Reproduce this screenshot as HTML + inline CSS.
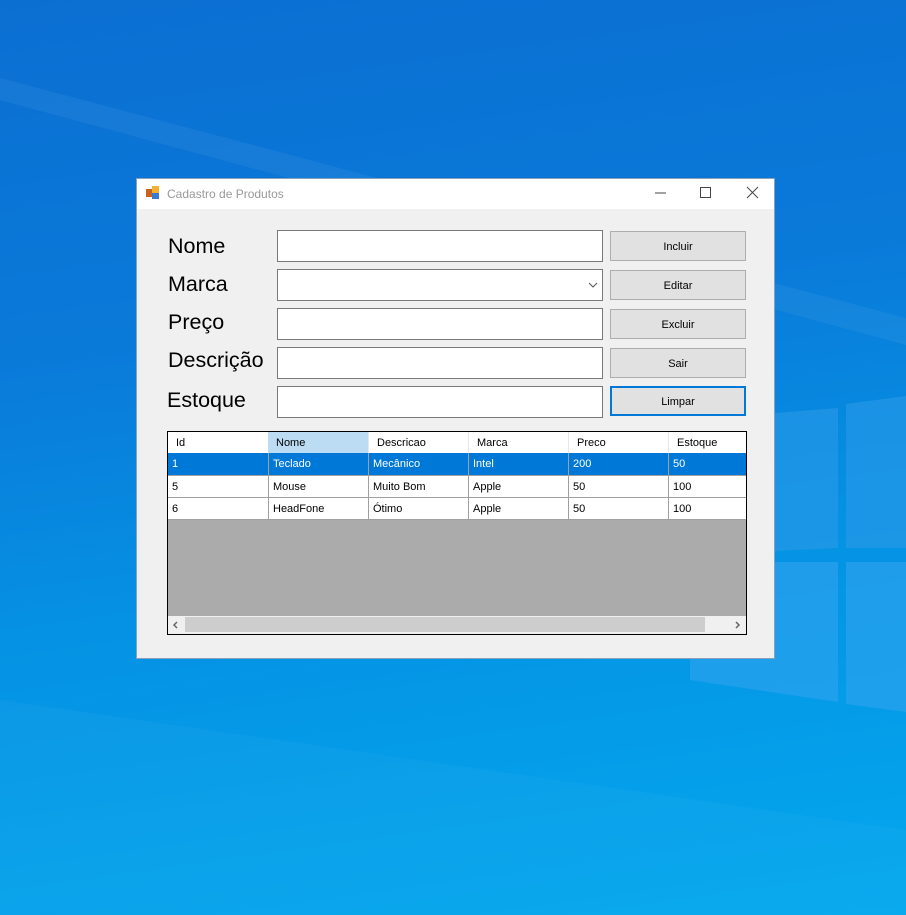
<!DOCTYPE html>
<html><head><style>
body{margin:0;width:906px;height:915px;overflow:hidden;position:relative;font-family:"Liberation Sans",sans-serif;background:linear-gradient(172deg,#0b6fd2 0%,#0a7ad9 35%,#0592e4 62%,#03a8ee 100%);}
.win{position:absolute;left:136px;top:178px;width:639px;height:481px;background:#f0f0f0;border:1px solid #8aa0b8;box-sizing:border-box}
.title{position:absolute;left:0;top:0;width:100%;height:30px;background:#fff}
.title span{position:absolute;left:30px;top:8px;font-size:12px;color:#999}
.lbl{position:absolute;font-size:21.5px;color:#000}
.tb{position:absolute;left:140px;width:326px;height:32px;background:#fff;border:1px solid #7a7a7a;box-sizing:border-box}
.btn{position:absolute;left:473px;width:136px;height:30px;background:#e1e1e1;border:1px solid #adadad;box-sizing:border-box;font-size:11px;text-align:center;line-height:30px}
.grid{position:absolute;left:30px;top:252px;width:580px;height:204px;border:1px solid #000;box-sizing:border-box;background:#ababab;overflow:hidden}
.row{position:absolute;left:0;height:22px;width:578px;font-size:11px}
.c{position:absolute;top:0;height:100%;width:100px;box-sizing:border-box;padding-left:4px;line-height:23px}
</style></head><body>
<svg style="position:absolute;left:0;top:0" width="906" height="915">
<polygon points="0,78 906,318 906,345 0,100" fill="#ffffff" opacity="0.05"/>
<polygon points="690,420 838,408 838,548 690,555" fill="#2a9ae8" opacity="0.6"/>
<polygon points="846,404 906,396 906,548 846,548" fill="#2a9ae8" opacity="0.6"/>
<polygon points="690,562 838,562 838,702 690,680" fill="#30a3ee" opacity="0.6"/>
<polygon points="846,562 906,562 906,712 846,704" fill="#30a3ee" opacity="0.6"/>
<polygon points="0,700 906,830 906,915 0,915" fill="#ffffff" opacity="0.03"/>
</svg>
<div class="win">
<div class="title">
<svg style="position:absolute;left:9px;top:7px" width="14" height="14"><rect x="0" y="3" width="7" height="8" fill="#c8641e"/><rect x="6" y="0" width="7" height="7" fill="#f0b030"/><rect x="6" y="7" width="7" height="6" fill="#3a7ad0"/></svg>
<span>Cadastro de Produtos</span>
<svg style="position:absolute;left:515px;top:7px" width="110" height="14"><line x1="3" y1="7" x2="14" y2="7" stroke="#444"/><rect x="48.5" y="1.5" width="10" height="10" fill="none" stroke="#444"/><line x1="95" y1="1" x2="106" y2="12" stroke="#444"/><line x1="106" y1="1" x2="95" y2="12" stroke="#444"/></svg>
</div>
<div class="lbl" style="left:31px;top:55px">Nome</div>
<div class="lbl" style="left:31px;top:93px">Marca</div>
<div class="lbl" style="left:31px;top:131px">Preço</div>
<div class="lbl" style="left:31px;top:169px">Descrição</div>
<div class="lbl" style="left:30px;top:209px">Estoque</div>
<div class="tb" style="top:51px"></div>
<div class="tb" style="top:90px"><svg style="position:absolute;right:4px;top:12px" width="10" height="6"><polyline points="1,1 5,5 9,1" fill="none" stroke="#555"/></svg></div>
<div class="tb" style="top:129px"></div>
<div class="tb" style="top:168px"></div>
<div class="tb" style="top:207px"></div>
<div class="btn" style="top:52px">Incluir</div>
<div class="btn" style="top:91px">Editar</div>
<div class="btn" style="top:130px">Excluir</div>
<div class="btn" style="top:169px">Sair</div>
<div class="btn" style="top:207px;border:2px solid #0078d7;line-height:28px">Limpar</div>
<div class="grid">
<div class="row" style="top:0;background:#fff;height:21px">
<div class="c" style="left:0;padding-left:8px">Id</div><div class="c" style="left:100px;background:#bcdcf4;padding-left:8px">Nome</div><div class="c" style="left:200px;padding-left:8px;border-left:1px solid #e8e8e8">Descricao</div><div class="c" style="left:300px;padding-left:8px;border-left:1px solid #e8e8e8">Marca</div><div class="c" style="left:400px;padding-left:8px;border-left:1px solid #e8e8e8">Preco</div><div class="c" style="left:500px;padding-left:8px;border-left:1px solid #e8e8e8">Estoque</div></div>
<div class="row" style="top:21px;background:#0078d7;color:#fff;border-bottom:1px solid #a0a0a0">
<div class="c" style="left:0">1</div><div class="c" style="left:100px;border-left:1px solid #a0a0a0">Teclado</div><div class="c" style="left:200px;border-left:1px solid #a0a0a0">Mecânico</div><div class="c" style="left:300px;border-left:1px solid #a0a0a0">Intel</div><div class="c" style="left:400px;border-left:1px solid #a0a0a0">200</div><div class="c" style="left:500px;border-left:1px solid #a0a0a0">50</div></div>
<div class="row" style="top:44px;background:#fff;border-bottom:1px solid #a0a0a0;height:21px">
<div class="c" style="left:0">5</div><div class="c" style="left:100px;border-left:1px solid #a0a0a0">Mouse</div><div class="c" style="left:200px;border-left:1px solid #a0a0a0">Muito Bom</div><div class="c" style="left:300px;border-left:1px solid #a0a0a0">Apple</div><div class="c" style="left:400px;border-left:1px solid #a0a0a0">50</div><div class="c" style="left:500px;border-left:1px solid #a0a0a0">100</div></div>
<div class="row" style="top:66px;background:#fff;border-bottom:1px solid #a0a0a0;height:21px">
<div class="c" style="left:0">6</div><div class="c" style="left:100px;border-left:1px solid #a0a0a0">HeadFone</div><div class="c" style="left:200px;border-left:1px solid #a0a0a0">Ótimo</div><div class="c" style="left:300px;border-left:1px solid #a0a0a0">Apple</div><div class="c" style="left:400px;border-left:1px solid #a0a0a0">50</div><div class="c" style="left:500px;border-left:1px solid #a0a0a0">100</div></div>
<div style="position:absolute;left:0;top:184px;width:578px;height:18px;background:#f0f0f0">
<div style="position:absolute;left:17px;top:1px;width:520px;height:15px;background:#cdcdcd"></div>
<svg style="position:absolute;left:4px;top:5px" width="6" height="8"><polyline points="5,1 2,4 5,7" fill="none" stroke="#666" stroke-width="1.5"/></svg>
<svg style="position:absolute;right:5px;top:5px" width="6" height="8"><polyline points="1,1 4,4 1,7" fill="none" stroke="#666" stroke-width="1.5"/></svg>
</div>
</div>
</div>
</body></html>
